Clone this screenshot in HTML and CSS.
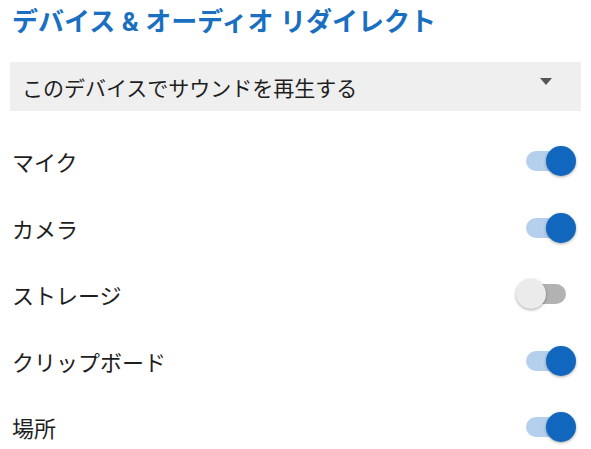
FILE: index.html
```html
<!DOCTYPE html>
<html lang="ja">
<head>
<meta charset="utf-8">
<link rel="stylesheet" href="styles.css">
</head>
<body>
<div class="panel">
  <h1 class="title">デバイス &amp; オーディオ リダイレクト</h1>
  <div class="select">
    <span class="select-text">このデバイスでサウンドを再生する</span>
    <span class="arrow"></span>
  </div>
  <div class="rows">
    <div class="row"><span class="label">マイク</span><span class="toggle on"><span class="knob"></span></span></div>
    <div class="row"><span class="label">カメラ</span><span class="toggle on"><span class="knob"></span></span></div>
    <div class="row"><span class="label">ストレージ</span><span class="toggle off"><span class="knob"></span></span></div>
    <div class="row"><span class="label">クリップボード</span><span class="toggle on"><span class="knob"></span></span></div>
    <div class="row"><span class="label">場所</span><span class="toggle on"><span class="knob"></span></span></div>
  </div>
</div>
</body>
</html>
```
FILE: styles.css
```css
* { box-sizing: border-box; }
html, body { margin: 0; padding: 0; background: #fff; }
body {
  font-family: "Roboto", "Noto Sans CJK JP", sans-serif;
  color: #1e1e1e;
  width: 591px;
  height: 449px;
  overflow: hidden;
}
.panel {
  padding: 0 10px;
}
.title {
  margin: 0 0 18px 2px;
  font-size: 26px;
  line-height: 44px;
  font-weight: 700;
  color: #1a6fc0;
}
.select {
  height: 49px;
  background: #efefef;
  display: flex;
  align-items: center;
  justify-content: space-between;
  padding: 0 29px 0 12px;
}
.select-text {
  font-size: 21px;
}
.arrow {
  width: 0;
  height: 0;
  border-left: 6px solid transparent;
  border-right: 6px solid transparent;
  border-top: 7px solid #555;
  margin-top: -10px;
}
.rows {
  margin-top: 17px;
  display: flex;
  flex-direction: column;
}
.row {
  height: 66.5px;
  display: flex;
  align-items: center;
  justify-content: space-between;
  padding: 0 15px 0 2px;
}
.label {
  font-size: 22px;
}
.toggle {
  position: relative;
  width: 40px;
  height: 20px;
  border-radius: 10px;
}
.toggle.on { background: #b4d0ec; }
.toggle.off { background: #b2b2b2; }
.knob {
  position: absolute;
  top: -5px;
  width: 30px;
  height: 30px;
  border-radius: 50%;
  box-shadow: 0 1px 3px rgba(0,0,0,0.35);
}
.toggle.on .knob { left: 20px; background: #1167bd; }
.toggle.off .knob { left: -10px; background: #ebebeb; }
```
